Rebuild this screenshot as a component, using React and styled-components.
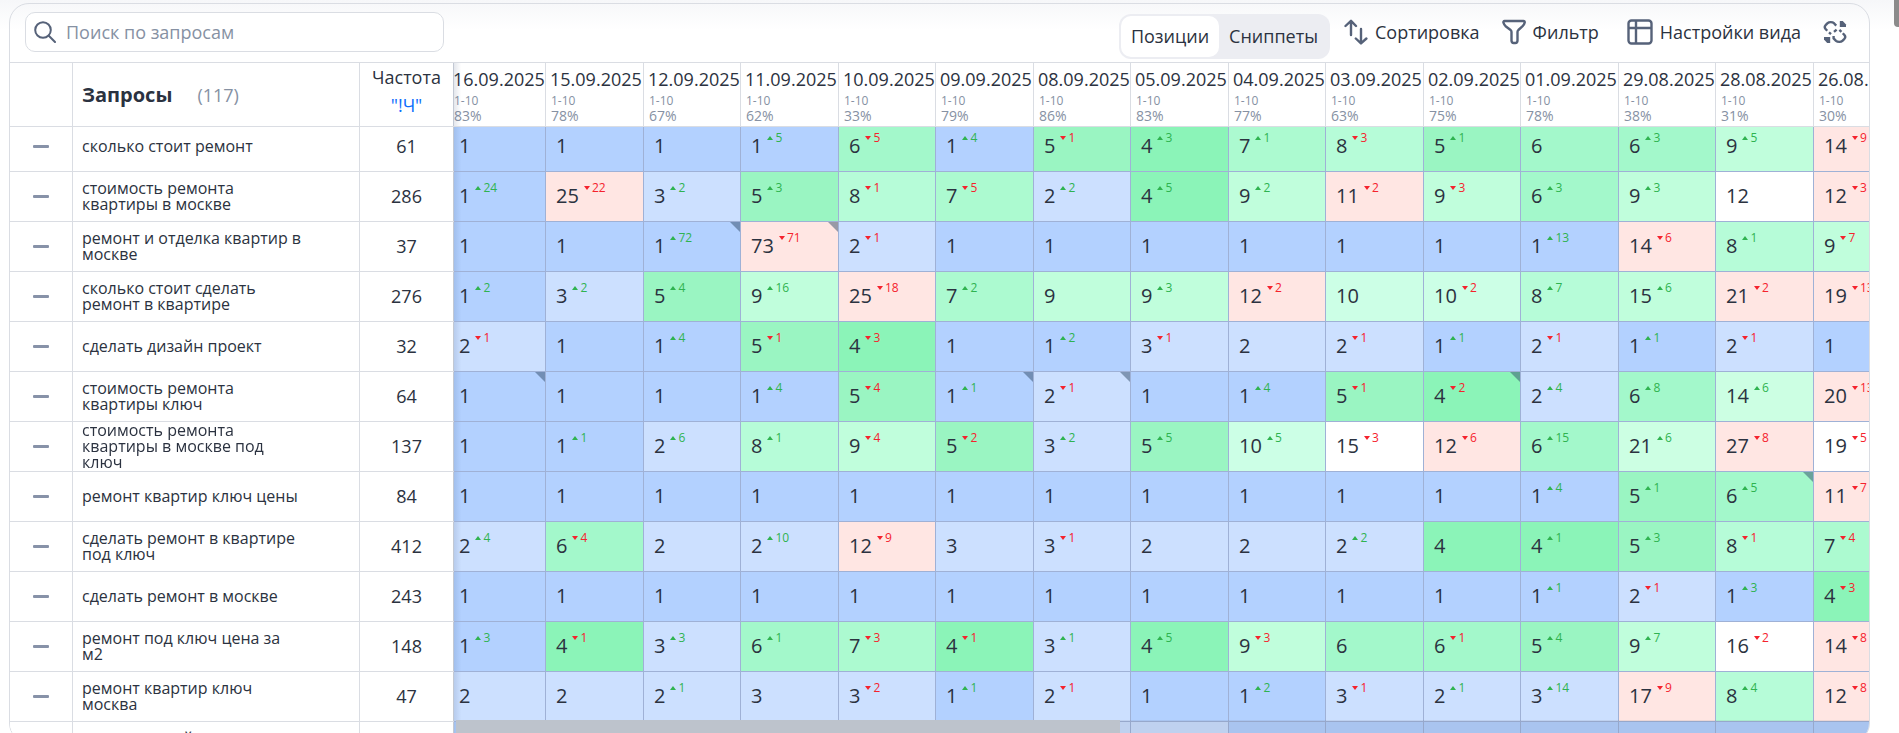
import { useLayoutEffect, useRef, useState } from 'react';
import styled, { createGlobalStyle, css } from 'styled-components';

const theme = {
  text: '#2b3240',
  muted: '#8691a3',
  icon: '#566279',
  line: '#dadde3',
  cellLine: '#9fb1d6',
  blue: '#0d6efd',
  up: '#2fb350',
  down: '#f5222d',
};

const dates = [
  ['16.09.2025', 83],
  ['15.09.2025', 78],
  ['12.09.2025', 67],
  ['11.09.2025', 62],
  ['10.09.2025', 33],
  ['09.09.2025', 79],
  ['08.09.2025', 86],
  ['05.09.2025', 83],
  ['04.09.2025', 77],
  ['03.09.2025', 63],
  ['02.09.2025', 75],
  ['01.09.2025', 78],
  ['29.08.2025', 38],
  ['28.08.2025', 31],
  ['26.08.2025', 30],
];

// position, then +up / -down, then * when the landing page has changed
const rows = [
  ['сколько стоит ремонт', 61, '1 1 1 1+5 6-5 1+4 5-1 4+3 7+1 8-3 5+1 6 6+3 9+5 14-9'],
  ['стоимость ремонта квартиры в москве', 286, '1+24 25-22 3+2 5+3 8-1 7-5 2+2 4+5 9+2 11-2 9-3 6+3 9+3 12 12-3'],
  ['ремонт и отделка квартир в москве', 37, '1 1 1+72* 73-71* 2-1 1 1 1 1 1 1 1+13 14-6 8+1 9-7'],
  ['сколько стоит сделать ремонт в квартире', 276, '1+2 3+2 5+4 9+16 25-18 7+2 9 9+3 12-2 10 10-2 8+7 15+6 21-2 19-13'],
  ['сделать дизайн проект', 32, '2-1 1 1+4 5-1 4-3 1 1+2 3-1 2 2-1 1+1 2-1 1+1 2-1 1'],
  ['стоимость ремонта квартиры ключ', 64, '1* 1 1 1+4 5-4 1+1* 2-1* 1 1+4 5-1 4-2* 2+4 6+8 14+6 20-13'],
  ['стоимость ремонта квартиры в москве под ключ', 137, '1 1+1 2+6 8+1 9-4 5-2 3+2 5+5 10+5 15-3 12-6 6+15 21+6 27-8 19-5'],
  ['ремонт квартир ключ цены', 84, '1 1 1 1 1 1 1 1 1 1 1 1+4 5+1 6+5* 11-7'],
  ['сделать ремонт в квартире под ключ', 412, '2+4 6-4 2 2+10 12-9 3 3-1 2 2 2+2 4 4+1 5+3 8-1 7-4'],
  ['сделать ремонт в москве', 243, '1 1 1 1 1 1 1 1 1 1 1 1+1 2-1 1+3 4-3'],
  ['ремонт под ключ цена за м2', 148, '1+3 4-1 3+3 6+1 7-3 4-1 3+1 4+5 9-3 6 6-1 5+4 9+7 16-2 14-8'],
  ['ремонт квартир ключ москва', 47, '2 2 2+1 3 3-2 1+1 2-1 1 1+2 3-1 2+1 3+14 17-9 8+4 12-8'],
  ['сделать дизайн проект квартиры', 52, '1 1 1 1 1 1 2 2 1 1 1 1 1 1 1'],
];

const topColors = [
  '#b3d1ff',
  '#cce0ff',
  '#cce0ff',
  '#8bf4b8',
  '#9af5c2',
  '#a3f8cb',
  '#acfad0',
  '#b6fcd8',
  '#c0fedc',
  '#ccffe6',
];

function parseCell(value) {
  const [, position, sign, delta, changed] = value.match(/^(\d+)([+-])?(\d+)?(\*)?$/);
  return { position: Number(position), sign, delta: Number(delta || 0), changed: !!changed };
}

function cellColor({ position, sign, delta }) {
  if (position <= 10) return topColors[position - 1];
  if (sign === '+') return position === 15 ? '#c0fedc' : '#ccffe3';
  // fell out of the top ten, or a big drop lower down
  if (sign === '-') {
    if (position - delta <= 10 || position >= 20) return '#ffe6e3';
  }
  return '#fff';
}

function SearchIcon() {
  return (
    <svg width="22" height="22" viewBox="0 0 22 22" fill="none" stroke="currentColor" strokeWidth="2" strokeLinecap="round">
      <circle cx="9" cy="9" r="7.8" />
      <path d="M14.8 14.8 21 21" />
    </svg>
  );
}

function SortIcon() {
  return (
    <svg width="24" height="26" viewBox="0 0 24 26" fill="none" stroke="currentColor" strokeWidth="2.4" strokeLinecap="round" strokeLinejoin="round">
      <path d="M7 16V2M1.500 7 7 1.800 12 7" />
      <path d="M17 10v14M11.800 19.500 17 24.400 22.400 19.500" />
    </svg>
  );
}

function FilterIcon() {
  return (
    <svg width="24" height="26" viewBox="0 0 24 26" fill="none" stroke="currentColor" strokeWidth="2.4" strokeLinejoin="round">
      <path d="M2.600 2h18.800c1 0 1.600.8 1.200 1.800-.3 1.500-1 2.400-2 3.400l-4.200 3.800c-.6.6-.9 1.200-.9 2v8.500c0 1.600-.8 2.500-2.200 2.500h-1.600c-1.400 0-2.200-.9-2.200-2.500V13c0-.8-.3-1.400-.9-2L3.600 7.200c-1-1-1.700-1.900-2.100-3.400C1.200 2.800 1.600 2 2.600 2Z" />
    </svg>
  );
}

function TableIcon() {
  return (
    <svg width="26" height="26" viewBox="0 0 26 26" fill="none" stroke="currentColor" strokeWidth="2.4">
      <rect x="1.500" y="1.500" width="23" height="23" rx="3" />
      <path d="M9 1.500v23M1.500 9h23" />
    </svg>
  );
}

function UpdateIcon() {
  return (
    <svg width="24" height="24" viewBox="0 0 24 24" fill="none" stroke="currentColor" strokeWidth="2.4" strokeLinejoin="round">
      <path d="M4.200 10.800 2.400 8.800C1.500 7.600 1.500 6.400 2.600 5.200L4.600 3.200C6 1.800 9.400 1.800 11 3.200L13.200 5.600" />
      <path d="M6 12.400 8 14.200M11 11.800 13.600 9.600" />
      <path d="M19.800 13.200 21.600 15.200C22.500 16.400 22.500 17.600 21.400 18.800L19.400 20.800C18 22.200 14.600 22.200 13 20.800L10.600 18.400V16" />
      <path d="M18.400 11.800 16.400 9.800" />
      <path d="M16.800 1h3L23 4.400V7h-6.200Z" fill="currentColor" stroke="none" />
      <path d="M7.200 23h-3L1 19.600V17h6.200Z" fill="currentColor" stroke="none" />
    </svg>
  );
}

function PositionCell({ value }) {
  const cell = parseCell(value);
  return (
    <Cell $color={cellColor(cell)} $changed={cell.changed}>
      <Position>
        {cell.position}
        {cell.sign && (
          <Delta $up={cell.sign === '+'}>
            <Arrow $up={cell.sign === '+'} />
            {cell.delta}
          </Delta>
        )}
      </Position>
    </Cell>
  );
}

export default function App() {
  const scroller = useRef(null);
  const [tab, setTab] = useState('positions');

  useLayoutEffect(() => {
    scroller.current.scrollLeft = 5;
    scroller.current.scrollTop = 5;
  }, []);

  return (
    <Page>
      <GlobalStyle />
      <Panel>
        <Toolbar>
          <Search>
            <SearchIcon />
            <SearchInput type="text" placeholder="Поиск по запросам" aria-label="Поиск по запросам" />
          </Search>
          <Actions>
            <Tabs>
              <Tab $active={tab === 'positions'} onClick={() => setTab('positions')}>
                Позиции
              </Tab>
              <Tab $active={tab === 'snippets'} onClick={() => setTab('snippets')}>
                Сниппеты
              </Tab>
            </Tabs>
            <Action>
              <SortIcon />
              Сортировка
            </Action>
            <Action>
              <FilterIcon />
              Фильтр
            </Action>
            <Action $spaced>
              <TableIcon />
              Настройки вида
            </Action>
            <Action aria-label="Обновить">
              <UpdateIcon />
            </Action>
          </Actions>
        </Toolbar>
        <Body>
          <Scroller ref={scroller}>
            <Table>
              <colgroup>
                <Col $width={63} />
                <Col $width={287} />
                <Col $width={94} />
                {dates.map(([date], i) => (
                  <Col key={date} $width={i % 2 ? 98 : 97} />
                ))}
              </colgroup>
              <thead>
                <tr>
                  <StickyHead $left={0} />
                  <StickyHead $left={63}>
                    <Title>
                      Запросы <Count>(117)</Count>
                    </Title>
                  </StickyHead>
                  <StickyHead $left={350} $last>
                    <Frequency>
                      Частота
                      <FrequencyType href="#">"!Ч"</FrequencyType>
                    </Frequency>
                  </StickyHead>
                  {dates.map(([date, percent]) => (
                    <DateHead key={date}>
                      <DateText>{date}</DateText>
                      <Range>1-10</Range>
                      <Percent>{percent}%</Percent>
                    </DateHead>
                  ))}
                </tr>
              </thead>
              <tbody>
                {rows.map(([query, frequency, values]) => (
                  <tr key={query}>
                    <StickyCell $left={0}>
                      <Collapse aria-label="Свернуть" />
                    </StickyCell>
                    <StickyCell $left={63}>
                      <Query>{query}</Query>
                    </StickyCell>
                    <StickyCell $left={350} $last>
                      <Amount>{frequency}</Amount>
                    </StickyCell>
                    {values.split(' ').map((value, i) => (
                      <PositionCell key={i} value={value} />
                    ))}
                  </tr>
                ))}
              </tbody>
            </Table>
          </Scroller>
          <Track>
            <Thumb />
          </Track>
        </Body>
      </Panel>
      <PageThumb />
    </Page>
  );
}

const GlobalStyle = createGlobalStyle`
  * {
    box-sizing: border-box;
  }
  body {
    margin: 0;
    background: #fff;
    color: ${theme.text};
    font-family: 'Open Sans', 'Noto Sans', sans-serif;
    font-size: 18px;
  }
  button, input {
    font: inherit;
    color: inherit;
  }
`;

const Page = styled.div`
  position: relative;
  height: 100vh;
  overflow: hidden;
  padding: 3px 29px 0 9px;
  background: linear-gradient(#f6f7f9, #fff 30px);
`;

const PageThumb = styled.div`
  position: absolute;
  top: 0;
  right: 0;
  width: 5px;
  height: 27px;
  border-bottom-left-radius: 4px;
  background: #8b8b8b;
`;

const Panel = styled.main`
  display: flex;
  flex-direction: column;
  height: calc(100vh + 7px);
  border: 1px solid ${theme.line};
  border-radius: 20px;
  overflow: hidden;
`;

const Toolbar = styled.div`
  display: flex;
  flex: none;
  align-items: flex-start;
  justify-content: space-between;
  height: 59px;
  padding: 8px 14px 0 15px;
  border-bottom: 1px solid ${theme.line};
`;

const Search = styled.label`
  display: flex;
  align-items: center;
  gap: 10px;
  width: 419px;
  height: 40px;
  padding: 0 8px;
  border: 1px solid ${theme.line};
  border-radius: 10px;
  background: #fff;
  color: ${theme.icon};
`;

const SearchInput = styled.input`
  flex: 1;
  min-width: 0;
  padding: 0;
  border: none;
  outline: none;
  background: none;

  &::placeholder {
    color: ${theme.muted};
    opacity: 1;
  }
`;

const Actions = styled.div`
  display: flex;
  align-items: flex-start;
  gap: 14px;
`;

const Tabs = styled.div`
  display: flex;
  height: 45px;
  margin-top: 2px;
  padding: 2px;
  border-radius: 12px;
  background: #ecedf2;
`;

const Tab = styled.button`
  padding: 0 10px 2px;
  border: none;
  border-radius: 10px;
  background: ${({ $active }) => ($active ? '#fff' : 'transparent')};
  cursor: pointer;
`;

const Action = styled.button`
  display: flex;
  align-items: center;
  gap: 7px;
  height: 40px;
  margin-left: ${({ $spaced }) => ($spaced ? 6 : 0)}px;
  padding: 0 8px 0 0;
  border: none;
  background: none;
  white-space: nowrap;
  cursor: pointer;

  svg {
    color: ${theme.icon};
  }
`;

const Body = styled.div`
  position: relative;
  flex: 1;
  min-height: 0;
`;

const Scroller = styled.div`
  height: 100%;
  overflow: auto;
  scrollbar-width: none;
`;

const Table = styled.table`
  table-layout: fixed;
  width: 1906px;
  border-collapse: separate;
  border-spacing: 0;
  background: #fff;
`;

const Col = styled.col`
  width: ${({ $width }) => $width}px;
`;

const sticky = css`
  position: sticky;
  left: ${({ $left }) => $left}px;
  background: #fff;

  ${({ $last }) =>
    $last &&
    css`
      &::after {
        content: '';
        position: absolute;
        top: 0;
        bottom: 0;
        left: 100%;
        width: 8px;
        background: linear-gradient(90deg, rgba(60, 80, 120, 0.16), rgba(60, 80, 120, 0));
      }
    `}
`;

const Head = styled.th`
  position: sticky;
  top: 0;
  z-index: 2;
  height: 64px;
  padding: 0;
  border-right: 1px solid ${theme.line};
  border-bottom: 1px solid ${theme.line};
  background: #fff;
  font-weight: 400;
  text-align: left;
`;

const StickyHead = styled(Head)`
  ${sticky}
  z-index: 3;
`;

const DateHead = styled(Head)`
  padding: 2px 0 0 4px;
  white-space: nowrap;
`;

const DateText = styled.div`
  margin-bottom: 4px;
  line-height: 22px;
`;

const Range = styled.div`
  padding-left: 1px;
  color: ${theme.muted};
  font-size: 12px;
  line-height: 14px;
`;

const Percent = styled.div`
  padding-left: 1px;
  color: ${theme.muted};
  font-size: 14px;
  line-height: 16px;
`;

const Title = styled.div`
  display: flex;
  align-items: center;
  gap: 25px;
  padding-left: 9px;
  font-size: 20px;
  font-weight: 700;
`;

const Count = styled.span`
  color: ${theme.muted};
  font-size: 18px;
  font-weight: 400;
`;

const Frequency = styled.div`
  display: flex;
  flex-direction: column;
  align-items: center;
  padding-bottom: 7px;
  line-height: 28px;
`;

const FrequencyType = styled.a`
  color: ${theme.blue};
  text-decoration: none;
`;

const BodyCell = styled.td`
  height: 50px;
  padding: 0;
  border-right: 1px solid ${theme.line};
  border-bottom: 1px solid ${theme.line};
`;

const StickyCell = styled(BodyCell)`
  ${sticky}
  z-index: 1;
`;

const Collapse = styled.button`
  display: block;
  width: 16px;
  height: 3px;
  margin: 0 auto;
  padding: 0;
  border: none;
  border-radius: 1px;
  background: #8792a8;
  cursor: pointer;
`;

const Query = styled.div`
  width: 230px;
  padding: 0 0 1px 9px;
  font-size: 16px;
  line-height: 16px;
`;

const Amount = styled.div`
  padding-bottom: 2px;
  text-align: center;
`;

const Cell = styled(BodyCell)`
  position: relative;
  padding-left: 10px;
  border-color: ${theme.cellLine};
  background: ${({ $color }) => $color};
  white-space: nowrap;

  ${({ $changed }) =>
    $changed &&
    css`
      &::after {
        content: '';
        position: absolute;
        top: 0;
        right: 0;
        border-top: 10px solid rgba(50, 75, 105, 0.5);
        border-left: 10px solid transparent;
      }
    `}
`;

const Position = styled.div`
  display: flex;
  align-items: center;
  gap: 5px;
  padding-bottom: 2px;
  font-size: 20px;
  line-height: 28px;
`;

const Delta = styled.span`
  display: flex;
  align-items: center;
  gap: 2px;
  margin-bottom: 16px;
  color: ${({ $up }) => ($up ? theme.up : theme.down)};
  font-size: 12px;
  line-height: 12px;
`;

const Arrow = styled.i`
  border: 0 solid transparent;
  border-width: ${({ $up }) => ($up ? '0 3px 4px' : '4px 3px 0')};
  border-${({ $up }) => ($up ? 'bottom' : 'top')}-color: currentColor;
`;

const Track = styled.div`
  position: absolute;
  right: 0;
  bottom: 0;
  left: 446px;
  z-index: 4;
  height: 22px;
  background: rgba(100, 110, 125, 0.12);
`;

const Thumb = styled.div`
  width: 47%;
  height: 100%;
  background: #bdc3cc;
`;
